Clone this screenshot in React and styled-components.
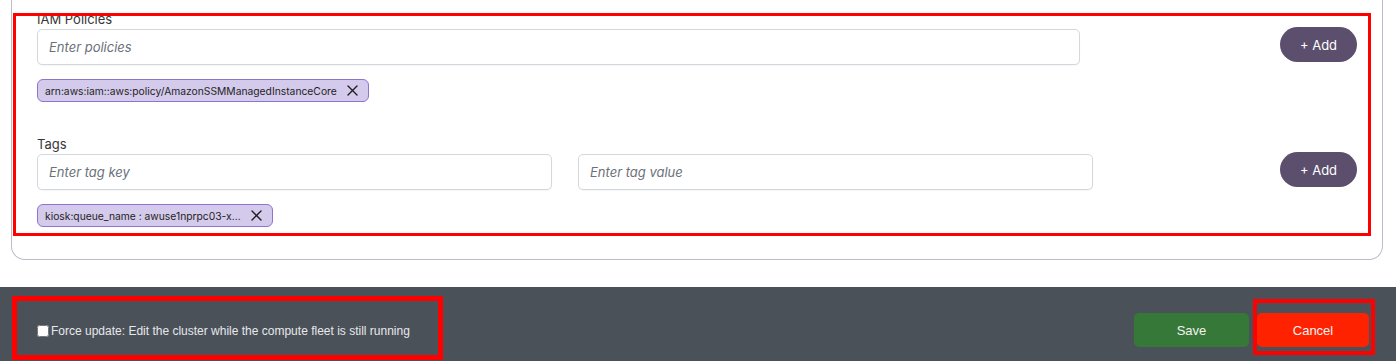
import React from "react";
import styled, { createGlobalStyle } from "styled-components";

const GlobalStyle = createGlobalStyle`
  html, body {
    margin: 0;
    padding: 0;
    background: #ffffff;
  }
  body {
    font-family: "Inter", "Liberation Sans", sans-serif;
  }
  * {
    box-sizing: border-box;
  }
`;

const Page = styled.div`
  display: flex;
  flex-direction: column;
  min-height: 361px;
`;

const Card = styled.div`
  position: relative;
  margin: 0 13px 0 11px;
  padding: 11px 25px 32px 25px;
  background: #ffffff;
  border: 1px solid #b8bec5;
  border-top: none;
  border-radius: 0 0 14px 14px;
  display: flex;
  flex-direction: column;

  /* red annotation frame drawn over the form */
  &::after {
    content: "";
    position: absolute;
    top: 13px;
    left: 1px;
    right: 11px;
    bottom: 23px;
    border: 3px solid #ff0000;
    pointer-events: none;
  }
`;

const FieldRow = styled.div`
  display: flex;
  justify-content: space-between;
  align-items: flex-start;
  margin-top: ${(p) => p.$gap || 0}px;
`;

const FieldBody = styled.div`
  display: flex;
  flex-direction: column;
  align-items: flex-start;
`;

const Label = styled.label`
  font-size: 13px;
  line-height: 17px;
  color: #363636;
  margin-bottom: 1px;
`;

const Inputs = styled.div`
  display: flex;
  gap: 26px;
`;

const TextInput = styled.input`
  width: ${(p) => p.$width}px;
  height: 36px;
  padding: 0 11px;
  border: 1px solid #d3d8de;
  border-radius: 5px;
  background: #ffffff;
  font-family: "Inter", "Liberation Sans", sans-serif;
  font-size: 13px;
  color: #222;
  outline: none;
  box-shadow: 0 1px 1px rgba(0, 0, 0, 0.04);

  &::placeholder {
    font-style: italic;
    color: #6b717b;
  }
`;

const Chips = styled.div`
  display: flex;
  gap: 8px;
  margin-top: 14px;
`;

const Chip = styled.span`
  display: inline-flex;
  align-items: center;
  height: 23px;
  padding: 0 10px 0 7px;
  gap: 10px;
  background: #d4caeb;
  border: 1px solid #8e74cd;
  border-radius: 6px;
  font-size: 10.3px;
  color: #1f1f1f;
  white-space: nowrap;
`;

const ChipClose = styled.button`
  display: flex;
  align-items: center;
  justify-content: center;
  padding: 0;
  border: none;
  background: none;
  cursor: pointer;
`;

const AddButton = styled.button`
  width: 77px;
  height: 35px;
  margin-top: 16px;
  border: none;
  border-radius: 18px;
  background: #5c4f6d;
  color: #ffffff;
  font-family: "Inter", "Liberation Sans", sans-serif;
  font-size: 13px;
  cursor: pointer;
`;

const Footer = styled.div`
  margin-top: 27px;
  flex: 1;
  min-height: 74px;
  background: #4b5159;
  display: flex;
  justify-content: space-between;
  align-items: flex-start;
  padding: 9px 21px 0 12px;
  font-family: "Liberation Sans", Arial, sans-serif;
`;

const ForceFrame = styled.div`
  width: 431px;
  height: 64px;
  border: 5px solid #ff0000;
  display: flex;
  align-items: center;
  padding: 5px 0 0 20px;
`;

const Check = styled.input`
  width: 12px;
  height: 12px;
  margin: 0 2px 0 0;
`;

const CheckLabel = styled.span`
  font-size: 12px;
  color: #e6e8eb;
`;

const Actions = styled.div`
  display: flex;
  align-items: flex-start;
  gap: 4px;
  margin-top: 3px;
`;

const ActionButton = styled.button`
  width: ${(p) => p.$width}px;
  height: 34px;
  border: none;
  border-radius: 5px;
  background: ${(p) => p.$bg};
  color: #f2f2f2;
  font-family: "Liberation Sans", Arial, sans-serif;
  font-size: 13px;
  cursor: pointer;
`;

const SaveButton = styled(ActionButton)`
  margin-top: 14px;
`;

const CancelFrame = styled.div`
  border: 4px solid #ff0000;
  padding: 10px 2px 4px 0;
`;

const CloseIcon = () => (
  <svg width="11" height="11" viewBox="0 0 11 11">
    <path d="M1 1 L10 10 M10 1 L1 10" stroke="#1f1f1f" strokeWidth="1.4" strokeLinecap="round" />
  </svg>
);

const policies = ["arn:aws:iam::aws:policy/AmazonSSMManagedInstanceCore"];
const tags = ["kiosk:queue_name : awuse1nprpc03-x..."];

export default function App() {
  return (
    <>
      <GlobalStyle />
      <Page>
        <Card>
          <FieldRow>
            <FieldBody>
              <Label>IAM Policies</Label>
              <TextInput $width={1043} placeholder="Enter policies" />
              <Chips>
                {policies.map((p) => (
                  <Chip key={p}>
                    {p}
                    <ChipClose aria-label="Remove">
                      <CloseIcon />
                    </ChipClose>
                  </Chip>
                ))}
              </Chips>
            </FieldBody>
            <AddButton>+ Add</AddButton>
          </FieldRow>

          <FieldRow $gap={34}>
            <FieldBody>
              <Label>Tags</Label>
              <Inputs>
                <TextInput $width={515} placeholder="Enter tag key" />
                <TextInput $width={515} placeholder="Enter tag value" />
              </Inputs>
              <Chips>
                {tags.map((t) => (
                  <Chip key={t}>
                    {t}
                    <ChipClose aria-label="Remove">
                      <CloseIcon />
                    </ChipClose>
                  </Chip>
                ))}
              </Chips>
            </FieldBody>
            <AddButton>+ Add</AddButton>
          </FieldRow>
        </Card>

        <Footer>
          <ForceFrame>
            <Check type="checkbox" />
            <CheckLabel>Force update: Edit the cluster while the compute fleet is still running</CheckLabel>
          </ForceFrame>
          <Actions>
            <SaveButton $width={115} $bg="#367837">Save</SaveButton>
            <CancelFrame>
              <ActionButton $width={112} $bg="#ff2200">Cancel</ActionButton>
            </CancelFrame>
          </Actions>
        </Footer>
      </Page>
    </>
  );
}
